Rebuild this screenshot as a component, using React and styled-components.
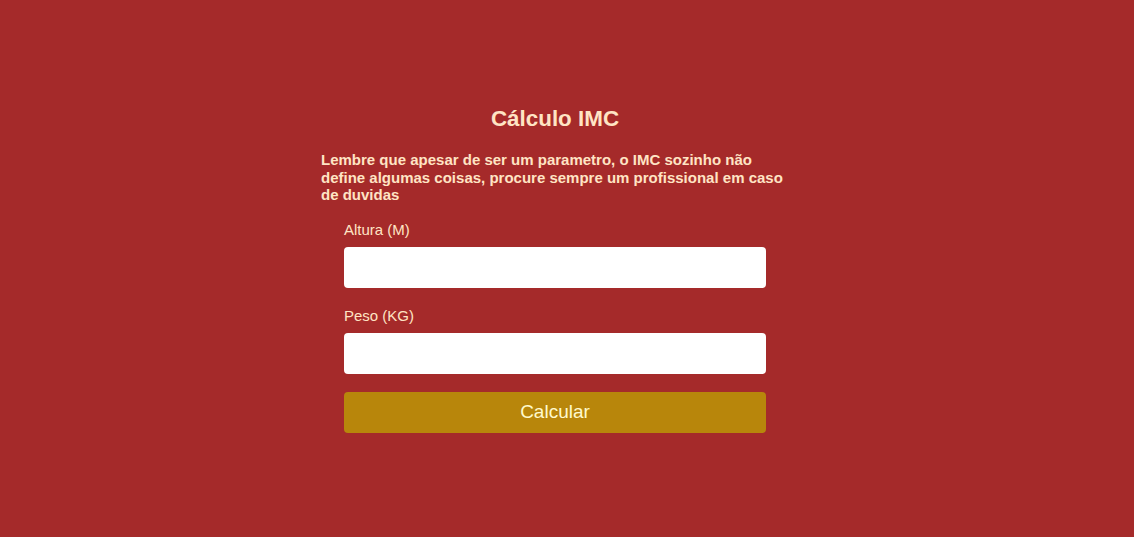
import React from "react";
import styled, { createGlobalStyle } from "styled-components";

const Global = createGlobalStyle`
  html, body { margin: 0; padding: 0; background: #a52a2a; }
  body { font-family: "Liberation Sans", Arial, sans-serif; color: #ffe4c4; }
`;

const Page = styled.main`
  display: flex;
  justify-content: center;
  padding: 105px 24px 0 0;
  min-height: 537px;
  box-sizing: border-box;
`;

const Container = styled.section`
  width: 468px;
  display: flex;
  flex-direction: column;
`;

const Title = styled.h1`
  margin: 0;
  text-align: center;
  font-size: 22.4px;
  font-weight: bold;
  line-height: 28px;
`;

const Note = styled.p`
  margin: 18px 0 0;
  font-size: 15px;
  font-weight: bold;
  line-height: 17.5px;
`;

const Form = styled.form`
  display: flex;
  flex-direction: column;
  padding: 0 23px;
  margin-top: 17px;
`;

const Label = styled.label`
  font-size: 15px;
  line-height: 17px;
  margin-top: ${(p) => (p.$first ? "0" : "19px")};
  margin-bottom: 9px;
`;

const Input = styled.input`
  height: 41px;
  border: none;
  border-radius: 4px;
  background: #fff;
  box-sizing: border-box;
  padding: 0 10px;
  font-size: 16px;
  font-family: inherit;
`;

const Button = styled.button`
  margin-top: 18px;
  height: 41px;
  border: none;
  border-radius: 4px;
  background: #b8860b;
  color: #fffacd;
  font-family: inherit;
  font-size: 19px;
  cursor: pointer;
`;

export default function App() {
  return (
    <>
      <Global />
      <Page>
        <Container>
          <Title>Cálculo IMC</Title>
          <Note>
            Lembre que apesar de ser um parametro, o IMC sozinho não define algumas coisas,
            procure sempre um profissional em caso de duvidas
          </Note>
          <Form onSubmit={(e) => e.preventDefault()}>
            <Label $first htmlFor="altura">Altura (M)</Label>
            <Input id="altura" type="number" />
            <Label htmlFor="peso">Peso (KG)</Label>
            <Input id="peso" type="number" />
            <Button type="submit">Calcular</Button>
          </Form>
        </Container>
      </Page>
    </>
  );
}
